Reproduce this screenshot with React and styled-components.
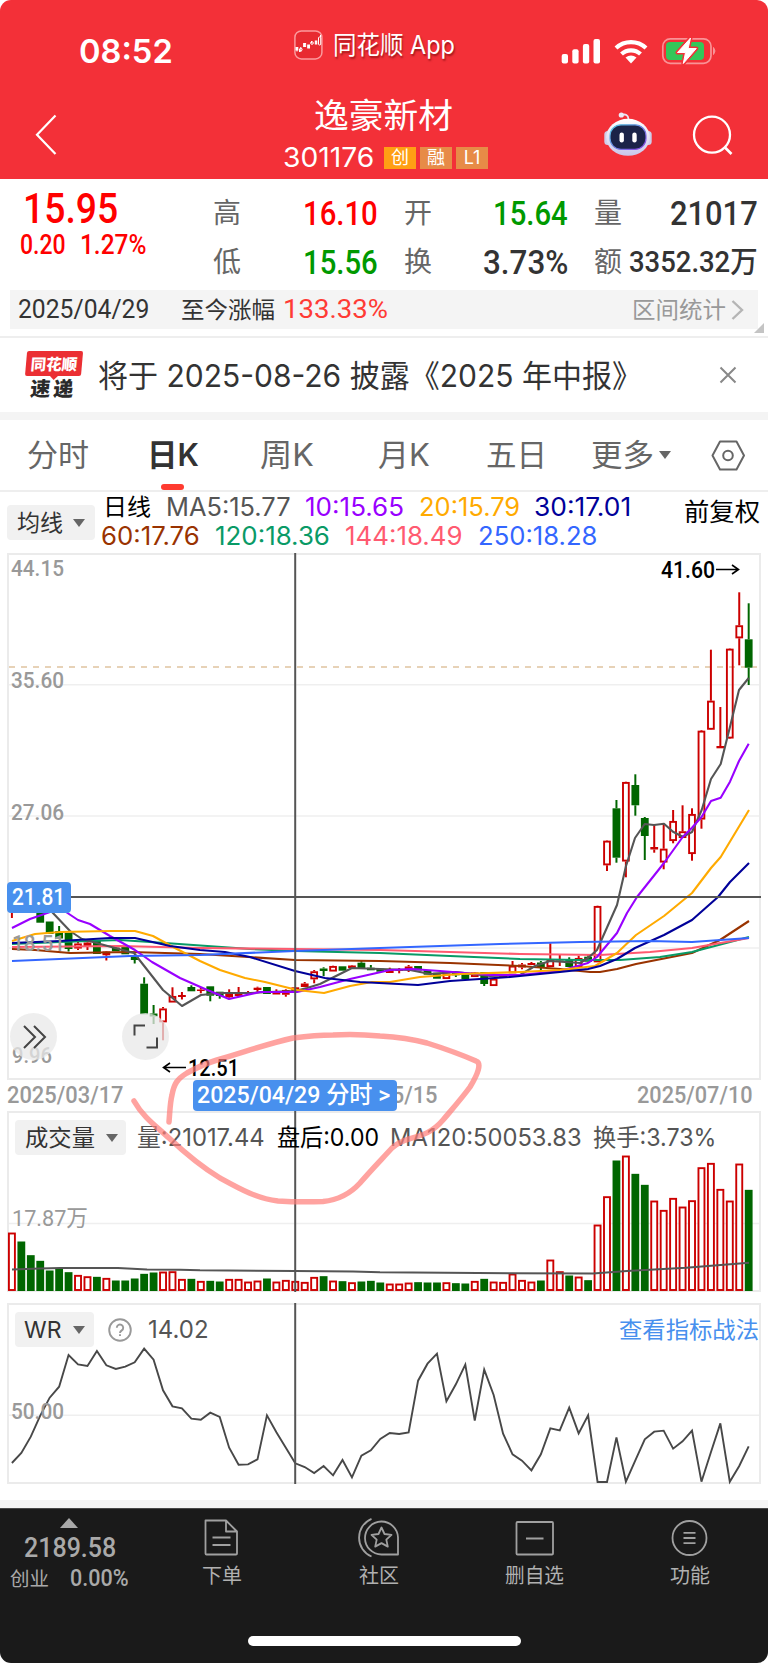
import React, { useLayoutEffect, useRef, useState } from "react";
import styled, { createGlobalStyle } from "styled-components";

const UI = `Inter, "Noto Sans CJK SC", sans-serif`;
const DIN = `Roboto, "Noto Sans CJK SC", sans-serif`;

const C = {
  red: "#f33038",
  up: "#ff0000",
  down: "#009900",
  candleUp: "#cc0000",
  candleDown: "#006600",
  blue: "#4890ee",
  ink: "#333333",
  grey: "#666666",
  pale: "#999999",
  line: "#ebebeb",
  band: "#f4f4f4",
  chip: "#f1f1f1",
};

const Global = createGlobalStyle`
  * { box-sizing: border-box; }
  body { margin: 0; background: #fff; font-family: ${UI}; }
`;

/* ---------- text ---------- */

const Slot = styled.span`
  display: block;
  flex: none;
  width: ${(p) => p.$width}px;
  margin-left: ${(p) => p.$ml || 0}px;
  white-space: nowrap;
`;

const Glyphs = styled.span`
  display: inline-block;
  vertical-align: top;
  transform-origin: 0 50%;
  font-family: ${(p) => (p.$din ? DIN : UI)};
  font-size: ${(p) => p.$size}px;
  font-weight: ${(p) => p.$weight || 400};
  line-height: ${(p) => Math.round(p.$size * 1.2)}px;
  color: ${(p) => p.$color};
  text-shadow: ${(p) => p.$shadow || "none"};
`;

/* A single-line label condensed or widened to fill its slot. */
function Label({ w, ml, size, weight, color = C.ink, din, shadow, children }) {
  const ref = useRef(null);
  const [k, setK] = useState(1);
  useLayoutEffect(() => {
    const natural = ref.current.offsetWidth;
    if (natural) setK(w / natural);
  }, [w, children]);
  return (
    <Slot $width={w} $ml={ml}>
      <Glyphs
        ref={ref}
        $size={size}
        $weight={weight}
        $color={color}
        $din={din}
        $shadow={shadow}
        style={{ transform: `scaleX(${k})` }}
      >
        {children}
      </Glyphs>
    </Slot>
  );
}

/* ---------- frame ---------- */

const Screen = styled.main`
  position: relative;
  width: 768px;
  height: 1663px;
  display: flex;
  flex-direction: column;
  background: #fff;
  border-radius: 11px;
  overflow: hidden;
`;

const Header = styled.header`
  height: 179px;
  background: ${C.red};
  display: flex;
  flex-direction: column;
`;

const StatusBar = styled.div`
  height: 92px;
  padding-top: 10px;
  display: flex;
  align-items: center;
`;

const AppName = styled.div`
  display: flex;
  align-items: center;
  margin: 0 0 12px 121px;
  gap: 10px;
`;

const StatusIcons = styled.svg`
  display: block;
  margin-left: 105px;
`;

const TitleBar = styled.div`
  display: flex;
  align-items: flex-start;
  height: 87px;
`;

const BackIcon = styled.svg`
  margin: 21px 0 0 33px;
`;

const TitleBlock = styled.div`
  width: 210px;
  margin-left: 223px;
  padding-top: 3px;
`;

const CodeRow = styled.div`
  display: flex;
  align-items: center;
  margin-top: 6px;
`;

const Badges = styled.div`
  display: flex;
  gap: 4px;
  margin-left: 10px;
`;

const Badge = styled.span`
  width: 32px;
  height: 22px;
  display: flex;
  justify-content: center;
  align-items: center;
  font: 400 18px/22px ${UI};
  color: #fff;
  background: ${(p) => p.$bg};
`;

const HeaderIcons = styled.svg`
  margin: 17px 0 0 110px;
`;

/* ---------- quote ---------- */

const Quote = styled.section`
  height: 159px;
  border-bottom: 2px solid #eee;
  position: relative;
`;

const QuoteTop = styled.div`
  display: flex;
  height: 111px;
`;

const PriceBlock = styled.div`
  width: 212px;
  padding: 5px 0 0 20px;
`;

const ChangeRow = styled.div`
  display: flex;
  margin-top: -5px;
`;

const StatGrid = styled.div`
  display: grid;
  grid-template-columns: 191px 190px 165px;
  grid-template-rows: 48px 50px;
  padding-top: 10px;
`;

const Stat = styled.div`
  display: flex;
  align-items: center;
  justify-content: space-between;
  padding: 0 ${(p) => p.$pad}px 0 1px;
`;

const RangeBar = styled.div`
  height: 39px;
  margin: 0 10px;
  background: ${C.band};
  display: flex;
  align-items: center;
`;

const Corner = styled.i`
  position: absolute;
  right: 4px;
  bottom: 3px;
  border-style: solid;
  border-width: 0 0 10px 10px;
  border-color: transparent transparent #c4c4c4 transparent;
`;

/* ---------- notice ---------- */

const Notice = styled.section`
  height: 74px;
  display: flex;
  align-items: center;
  padding-left: 24px;
`;

const Express = styled.div`
  width: 58px;
  height: 49px;
  display: flex;
  flex-direction: column;
  align-items: center;
  transform: skewX(-5deg);
  font-family: "Noto Sans CJK SC", sans-serif;
  font-weight: 900;
`;

const ExpressTop = styled.div`
  position: relative;
  width: 56px;
  height: 25px;
  border-radius: 2px;
  background: #eb2f33;
  color: #fff;
  font-size: 15.5px;
  line-height: 25px;
  text-align: center;
  &::after {
    content: "";
    position: absolute;
    left: 25px;
    top: 25px;
    border-style: solid;
    border-width: 4px 4px 0 4px;
    border-color: #eb2f33 transparent transparent transparent;
  }
`;

const ExpressBottom = styled.div`
  width: 43px;
  display: flex;
  justify-content: space-between;
  color: #2a2a2a;
  font-size: 20px;
  line-height: 24px;
`;

const Band = styled.div`
  height: 8px;
  flex: none;
  background: ${C.band};
`;

/* ---------- tabs ---------- */

const Tabs = styled.nav`
  height: 72px;
  border-bottom: 2px solid #eee;
  display: flex;
`;

const Tab = styled.div`
  position: relative;
  display: flex;
  align-items: center;
  height: 70px;
  padding-bottom: 1px;
  margin-left: ${(p) => p.$ml}px;
`;

const Underline = styled.i`
  position: absolute;
  left: 14px;
  bottom: 0;
  width: 23px;
  height: 6px;
  border-radius: 3px;
  background: #ff3b30;
`;

const Caret = styled.i`
  flex: none;
  margin-left: ${(p) => p.$ml}px;
  border-style: solid;
  border-width: 8px 6px 0 6px;
  border-color: ${C.grey} transparent transparent transparent;
`;

const TabIcon = styled.svg`
  margin: 19px 0 0 39px;
`;

/* ---------- indicator headers ---------- */

const Legend = styled.section`
  height: 61px;
  display: flex;
  padding-left: 7px;
`;

const Chip = styled.div`
  flex: none;
  width: ${(p) => p.$w}px;
  height: 35px;
  border-radius: 4px;
  background: ${C.chip};
  display: flex;
  align-items: center;
`;

const LegendChip = styled(Chip)`
  margin-top: 13px;
`;

const LegendLines = styled.div`
  width: 583px;
  margin-left: 6px;
`;

const LegendLine = styled.div`
  display: flex;
  height: 29px;
  align-items: center;
`;

const Adjust = styled.div`
  padding-top: 5px;
`;

/* ---------- chart panels ---------- */

const Panel = styled.section`
  position: relative;
  flex: none;
  width: 754px;
  height: ${(p) => p.$h}px;
  margin-left: 7px;
  border: 2px solid ${C.line};
`;

const Plot = styled.svg`
  position: absolute;
  left: -2px;
  top: -2px;
  display: block;
  overflow: visible;
`;

const PanelHead = styled.div`
  position: relative;
  display: flex;
  align-items: center;
  height: 35px;
  margin: ${(p) => p.$mt}px 0 0 6px;
`;

const HelpIcon = styled.svg`
  margin-left: 14px;
`;

const DateAxis = styled.div`
  flex: none;
  height: 31px;
  display: flex;
  align-items: center;
  position: relative;
`;

const DateTag = styled.div`
  position: absolute;
  left: 193px;
  top: 0;
  width: 204px;
  height: 31px;
  border-radius: 4px;
  background: ${C.blue};
  display: flex;
  align-items: center;
`;

const RoundButton = styled.div`
  position: absolute;
  left: ${(p) => p.$x}px;
  top: 458px;
  width: 47px;
  height: 47px;
  border-radius: 50%;
  background: rgba(232, 232, 232, 0.75);
`;

const PriceTag = styled.div`
  position: absolute;
  left: -2px;
  top: 327px;
  width: 64px;
  height: 31px;
  border-radius: 4px;
  background: ${C.blue};
  display: flex;
  align-items: center;
`;

const Gap = styled.div`
  flex: none;
  height: ${(p) => p.$h}px;
`;

const Annotation = styled.svg`
  position: absolute;
  left: 120px;
  top: 1020px;
  pointer-events: none;
`;

/* ---------- footer ---------- */

const Footer = styled.footer`
  flex: none;
  height: 155px;
  background: #1a1a1a;
  border-top: 1px solid #484848;
  display: flex;
  flex-direction: column;
  align-items: flex-start;
`;

const FooterRow = styled.div`
  display: flex;
  height: 127px;
`;

const IndexBox = styled.div`
  width: 140px;
  height: 90px;
  padding: 9px 0 0 10px;
`;

const UpMark = styled.i`
  display: block;
  width: 0;
  margin-left: 50px;
  border-style: solid;
  border-width: 0 9px 10px 9px;
  border-color: transparent transparent #a9a9a9 transparent;
`;

const IndexRow = styled.div`
  display: flex;
  align-items: center;
  margin-top: ${(p) => p.$mt}px;
`;

const Action = styled.div`
  width: ${(p) => p.$w}px;
  display: flex;
  flex-direction: column;
  align-items: center;
  gap: 5px;
  padding: 7px 2px 0 0;
`;

const HomeBar = styled.div`
  align-self: center;
  width: 273px;
  height: 10px;
  border-radius: 5px;
  background: #fff;
`;

/* ---------- data ---------- */

const STEP = 9.446;
const X0 = 11.9;
const px = (i) => X0 + i * STEP;

/* trend, wick top, body top, body bottom, wick bottom */
const candles = [
  ["R", 905, 905, 905, 918], ["G", 900, 900, 908, 908], ["G", 900, 900, 908, 913],
  ["G", 905, 905, 922.7, 922.7], ["G", 921.5, 921.5, 934, 934], ["G", 926, 931, 938.5, 938.5],
  ["G", 932.7, 932.7, 949, 951.5], ["R", 941, 943.5, 948.5, 950], ["R", 941, 942.5, 946.5, 950],
  ["G", 941, 941, 954, 954], ["R", 951, 951.5, 955.3, 960.5], ["G", 946, 947.5, 951.3, 951.3],
  ["G", 946.5, 946.5, 954.3, 954.3], ["G", 955, 956, 960, 963.5], ["G", 977.3, 983.7, 1014.3, 1014.3],
  ["G", 1005, 1013.5, 1016.5, 1024], ["R", 1007, 1008.5, 1022.3, 1040.3], ["R", 987.3, 996, 1002.5, 1002.5],
  ["R", 992, 995, 997, 999.5], ["G", 985.3, 987, 991.3, 991.3], ["R", 987.3, 989.5, 991, 993.3],
  ["G", 986.3, 986.3, 995.7, 1001.3], ["G", 991.7, 991.7, 996, 998.7], ["R", 989.3, 993.7, 997.3, 999.3],
  ["R", 987, 992.5, 996, 996], ["R", 991, 992.5, 994, 994], ["R", 986.7, 987.7, 990, 992.7],
  ["G", 987, 987, 994, 994], ["R", 989.3, 992, 994.5, 994.5], ["R", 989.3, 990, 994.7, 996.7],
  ["R", 987, 987.3, 991, 991], ["R", 982, 983.5, 987, 987], ["R", 970, 971.3, 979.3, 983.3],
  ["G", 967.3, 968.5, 971, 976], ["R", 965.7, 966, 971.5, 971.5], ["G", 966.3, 966.3, 970.7, 970.7],
  ["R", 965, 965.5, 968, 968], ["G", 961, 962.7, 968, 968], ["G", 965, 967.7, 970.3, 970.3],
  ["G", 968.7, 968.7, 971.7, 971.7], ["R", 967.7, 970, 973, 973], ["R", 968, 969.5, 971, 973.3],
  ["R", 965, 966.5, 970, 972], ["G", 966, 966, 970.5, 970.5], ["G", 970, 970, 974.7, 974.7],
  ["G", 972.7, 972.7, 978.7, 978.7], ["R", 973.3, 973.5, 979, 979], ["G", 972.7, 973, 975.3, 977],
  ["G", 974.3, 974.3, 979.3, 979.3], ["R", 972, 972.5, 977, 977], ["G", 972, 972, 984, 986],
  ["R", 978, 978.7, 986, 986], ["R", 975, 975, 977.5, 977.5], ["R", 961, 965.7, 973.3, 973.3],
  ["R", 963, 964.5, 967.5, 969.3], ["R", 962, 963, 965, 965], ["G", 961, 962.5, 967.3, 970],
  ["R", 943.3, 959.7, 967, 967], ["R", 955, 959, 960.5, 966], ["G", 957.3, 959.5, 967, 967],
  ["R", 955.7, 958, 967, 967], ["G", 955, 956.7, 961.7, 961.7], ["R", 905.7, 906, 962.3, 962.3],
  ["R", 840.3, 840.7, 865.3, 871], ["G", 800, 808.3, 857.7, 862.7], ["R", 781.7, 782, 861.5, 877.3],
  ["G", 774.3, 785, 805.3, 815.7], ["G", 817, 818, 836, 860], ["R", 824, 847, 849.5, 852.7],
  ["R", 825, 848.7, 862.5, 869.3], ["R", 810, 821, 841, 843.3], ["R", 805.3, 831.3, 838, 838],
  ["R", 808.3, 814, 854, 860.7], ["R", 730, 730.7, 819.5, 828.7], ["R", 649.7, 700.7, 729.7, 730],
  ["R", 707, 746, 748.3, 748.3], ["R", 648.3, 648.7, 738.5, 739], ["R", 592.3, 625.3, 638.3, 665.3],
  ["G", 603.3, 639.3, 667.7, 685],
];

const volumes = [
  369, 396, 437, 454, 483, 476, 488, 496, 500, 502, 505, 513, 513, 507, 493, 489, 486, 485, 508, 508,
  514, 514, 516, 508, 508, 516, 513, 507, 516, 511, 514, 517, 502, 500, 513, 515, 518, 516, 514, 519,
  522, 522, 519, 518, 519, 519, 518, 521, 522, 514, 508, 516, 517, 492, 511, 516, 513, 450, 485, 498,
  501, 512, 345, 260, 153, 138, 193, 226, 273, 301, 265, 291, 272, 173, 160, 238, 273, 162, 241,
];
const volumeTrend =
  "RGGGGGGRRGRGGGGGRRRGRGGRRRRGRRRRRGRGRGGGRRRGGGRGGRGRRRRRGRRGRGRRGRGGRRRRRRRRRRG";

const wr = [
  504, 474, 425, 362, 308, 275, 180, 208, 213, 168, 211, 222, 215, 202, 161, 194, 286, 334, 340, 371,
  374, 353, 366, 458, 509, 508, 493, 361, 412, 458, 505, 516, 534, 513, 541, 495, 547, 482, 466, 432,
  414, 417, 412, 257, 206, 176, 319, 268, 209, 377, 224, 300, 416, 478, 497, 526, 478, 400, 406, 338,
  415, 361, 561, 561, 427, 560, 496, 433, 410, 407, 461, 439, 407, 560, 472, 385, 560, 513, 454,
];

const averages = [
  ["#993300", "12,949 35,950 70,953 130,952 200,954 295,960 380,961 450,963 520,966 560,969 590,972 600,972 617,969 636,964 692,953 720,940 749,921"],
  ["#099a66", "12,944 60,942 120,940 165,943 250,949 295,951 380,953 450,956 520,959 580,960 620,960 660,957 692,952 749,937"],
  ["#ff5a70", "12,947 120,946 200,948 295,949 380,950 450,952 520,954 600,955 650,952 692,948 749,938"],
  ["#555555", "52,912 70,931 82,939 115,948 134,953 163,990 182,1006 201,995 220,993 250,993 270,992 295,991 307,988 320,984 352,968 380,969 410,970 430,974 456,972 490,976 520,975 535,966 550,961 580,963 588,958 597,950 617,905 626,866 635,838 644.7,824 654,825 664,823.7 673,831.7 682.7,836.7 692,832 701.7,810 711,779 720.7,764 730,726.7 739,690 748.7,678"],
  ["#9900ff", "12,928 30,919 50,912 66,912 78,920 90,924 110,936 135,950 152,962 180,978 205,989 229,999 260,992 297,992 320,987 350,979 390,970 412,969 440,971 490,975 520,975 560,971 588,963 597,957 617,933 627,913 637,897 664,863 682.7,837 692,827.7 701.7,816.7 711,801 720.7,797.7 730,781.7 739,761 748.7,743.7"],
  ["#ffaa00", "12,941 35,934 60,932 110,931 135,931 153,936 175,948 200,961 220,970 245,978 265,982 297,990 324,993 350,986 372,982 390,982 420,977 460,974 520,972 560,970 595,966 617,953 636,935 664,916 692,893 711,868 720.7,857 749,810"],
  ["#000099", "12,943 60,941 110,938 135,938 170,946 200,950 225,952 250,957 295,971 325,978 360,982 418,985 450,981 510,977 560,972 588,969 600,966 617,959 635,948 664,935 692,920 718,897 730,882 749,863"],
  ["#3366ff", "12,961 130,956 200,955 295,951 380,948 500,944 580,942 650,941 692,942 749,938"],
];

const axisLabels = [["44.15", 11, 575.5], ["35.60", 11, 688], ["27.06", 11, 819.5], ["18.51", 12, 951], ["9.96", 12, 1063]];

/* ---------- drawings ---------- */

function Candle({ i, d: [t, hi, top, bot, lo] }) {
  const x = px(i);
  const up = t === "R";
  const color = up ? C.candleUp : C.candleDown;
  const h = bot - top;
  return (
    <g stroke={color} strokeWidth="2">
      {hi < top && <line x1={x} x2={x} y1={hi} y2={top} />}
      {lo > bot && <line x1={x} x2={x} y1={bot} y2={lo} />}
      {up && h > 4 ? (
        <rect x={x - 2.9} y={top + 0.9} width="5.8" height={h - 1.8} fill="none" strokeWidth="1.9" />
      ) : (
        <rect x={x - 3.9} y={top} width="7.8" height={Math.max(h, 1)} fill={color} stroke="none" />
      )}
    </g>
  );
}

const axisText = { fontFamily: DIN, fontSize: 22.5, fontWeight: 500, fill: C.pale, lengthAdjust: "spacingAndGlyphs" };
const peakText = { fontFamily: DIN, fontSize: 24, fontWeight: 500, fill: "#000", lengthAdjust: "spacingAndGlyphs" };

function PriceChart() {
  return (
    <Panel $h={527}>
      <Plot width="754" height="527" viewBox="7 553 754 527">
        {[684.7, 816, 948].map((y) => (
          <line key={y} x1="9" x2="759" y1={y} y2={y} stroke="#efefef" strokeWidth="1.5" />
        ))}
        <line x1="9" x2="757" y1="667" y2="667" stroke="#dfc3a0" strokeWidth="1.4" strokeDasharray="6 6" />
        {candles.map((d, i) => <Candle key={i} i={i} d={d} />)}
        {averages.map(([c, pts]) => (
          <polyline key={c} points={pts} fill="none" stroke={c} strokeWidth="2.1" strokeLinejoin="round" />
        ))}
        {axisLabels.map(([t, x, y]) => (
          <text key={t} x={x} y={y} textLength={t.length > 4 ? 53 : 40} {...axisText}>{t}</text>
        ))}
        <line x1="7" x2="761" y1="897" y2="897" stroke="#555" strokeWidth="2" />
        <line x1="295.2" x2="295.2" y1="553" y2="1080" stroke="#555" strokeWidth="2" />
        <text x="661" y="578" textLength="54" {...peakText}>41.60</text>
        <path d="M716 569.5H738M732 565l6.5 4.5-6.5 4.5" fill="none" stroke="#000" strokeWidth="1.6" />
        <text x="188" y="1076" textLength="51" {...peakText}>12.51</text>
        <path d="M186 1067.5H164M170 1063l-6.5 4.5 6.5 4.5" fill="none" stroke="#000" strokeWidth="1.6" />
      </Plot>
      <PriceTag><Label din ml={5} w={53} size={24} weight={500} color="#fff">21.81</Label></PriceTag>
      <RoundButton $x={1}>
        <svg width="47" height="47" viewBox="0 0 47 47" fill="none" stroke="#444" strokeWidth="2">
          <path d="M14 13l11 11-11 11M24 13l11 11-11 11" />
        </svg>
      </RoundButton>
      <RoundButton $x={113}>
        <svg width="47" height="47" viewBox="0 0 47 47" fill="none" stroke="#444" strokeWidth="2">
          <path d="M12.500 22.500V12.500h10.500M24.500 34.500H35V24.500" />
        </svg>
      </RoundButton>
    </Panel>
  );
}

function VolumeChart() {
  const y = (v) => 1109.5 + v / 3;
  return (
    <Panel $h={181}>
      <Plot width="754" height="181" viewBox="7 1111 754 181">
        <line x1="9" x2="759" y1="1223.500" y2="1223.500" stroke="#efefef" strokeWidth="1.5" />
        <text x="12" y="1226" textLength="76" {...axisText} fontWeight="400">17.87万</text>
        {volumes.map((v, i) =>
          volumeTrend[i] === "R" ? (
            <rect key={i} x={px(i) - 3} y={y(v) + 1} width="6" height={1289 - y(v)} fill="#fff" stroke={C.candleUp} strokeWidth="1.9" />
          ) : (
            <rect key={i} x={px(i) - 3.9} y={y(v)} width="7.8" height={1291 - y(v)} fill={C.candleDown} />
          )
        )}
        <polyline points="12,1269.500 40,1268.500 60,1268 118,1268 147,1269.500 180,1269.700 200,1270.300 295,1271 353,1271.500 380,1272.300 510,1273.200 593,1273.500 627,1271 686,1267.700 749,1262.700" fill="none" stroke="#555" strokeWidth="1.9" />
        <line x1="295.2" x2="295.2" y1="1111" y2="1292" stroke="#555" strokeWidth="2" />
      </Plot>
      <PanelHead $mt={7}>
        <Chip $w={111}>
          <Label ml={10} w={70} size={23}>成交量</Label>
          <Caret $ml={11} />
        </Chip>
        <Label ml={11} w={128} size={24} color="#555">量:21017.44</Label>
        <Label ml={12} w={102} size={24} color="#000">盘后:0.00</Label>
        <Label ml={11} w={192} size={24} color="#555">MA120:50053.83</Label>
        <Label ml={11} w={123} size={24} color="#555">换手:3.73%</Label>
      </PanelHead>
    </Panel>
  );
}

function WrChart() {
  const points = wr.map((v, i) => `${px(i)},${1295 + v / 3}`).join(" ");
  return (
    <Panel $h={181}>
      <Plot width="754" height="181" viewBox="7 1303 754 181">
        <line x1="9" x2="759" y1="1415.300" y2="1415.300" stroke="#efefef" strokeWidth="1.5" />
        <polyline points={points} fill="none" stroke="#484848" strokeWidth="1.9" />
        <text x="11" y="1419" textLength="53" {...axisText}>50.00</text>
        <line x1="295.2" x2="295.2" y1="1303" y2="1484" stroke="#555" strokeWidth="2" />
      </Plot>
      <PanelHead $mt={7}>
        <Chip $w={79}>
          <Label ml={9} w={37} size={23}>WR</Label>
          <Caret $ml={12} />
        </Chip>
        <HelpIcon width="24" height="24" viewBox="0 0 24 24" fill="none" stroke="#999" strokeWidth="1.900">
          <circle cx="12" cy="12" r="10.800" />
          <path d="M8.800 9.800a3.200 3.200 0 1 1 5 2.600c-1.200.8-1.800 1.300-1.800 2.500M12 16.300v1.700" />
        </HelpIcon>
        <Label ml={16} w={61} size={24} color="#555">14.02</Label>
        <Label ml={410} w={140} size={23} color={C.blue}>查看指标战法</Label>
      </PanelHead>
    </Panel>
  );
}

function StatusGlyphs() {
  return (
    <StatusIcons width="160" height="30" viewBox="560 36 160 30">
      <g fill="#fff">
        <rect x="561.700" y="54" width="6.300" height="9.500" rx="2" />
        <rect x="572.300" y="49.300" width="6.300" height="14.200" rx="2" />
        <rect x="582.900" y="44" width="6.300" height="19.500" rx="2" />
        <rect x="593.500" y="39" width="6.500" height="24.500" rx="2" />
        <path d="M625.500 57.500a9 9 0 0 1 11 0l-5.500 6z" />
      </g>
      <g fill="none" stroke="#fff" strokeWidth="4.200">
        <path d="M616 48a22 22 0 0 1 30 0" />
        <path d="M621.500 54a14 14 0 0 1 19 0" />
      </g>
      <rect x="662.800" y="38.800" width="48.200" height="24.500" rx="7.500" fill="none" stroke="#f99397" strokeWidth="1.700" />
      <rect x="666" y="42" width="38" height="18" rx="4" fill="#34c759" />
      <path d="M713.500 47.500q3 3.500 0 7z" fill="#f99397" stroke="#f99397" />
      <path d="M690.500 38l-13 14.500h8l-2.200 11 13-15h-8.200z" fill="#fff" stroke={C.red} strokeWidth="4" strokeLinejoin="round" />
      <path d="M690.500 38l-13 14.500h8l-2.200 11 13-15h-8.200z" fill="#fff" stroke="#fff" strokeWidth="1" strokeLinejoin="round" />
    </StatusIcons>
  );
}

function AppLogo() {
  return (
    <svg width="29" height="30" viewBox="0 0 29 30" fill="none">
      <rect x=".9" y=".9" width="27" height="28" rx="6.500" fill="#e82a31" stroke="#fb9a9d" strokeWidth="1.500" />
      <g stroke="#fff" strokeWidth="1">
        <path d="M5.500 19v3M10.500 14v2.500M17.500 11v2M26.500 5v2M3 21.500V17M6.800 17v5" />
        <rect x="2" y="17.500" width="1.800" height="2.500" fill="#fff" />
        <circle cx="6.800" cy="19.500" r="1.300" />
        <rect x="9.600" y="13.500" width="2" height="3" />
        <rect x="13.700" y="15" width="1.800" height="3" fill="#fff" />
        <circle cx="18" cy="13" r="1.300" />
        <rect x="21.300" y="11" width="1.500" height="3" fill="#fff" />
        <rect x="24.500" y="7" width="2.200" height="8" rx="1" />
      </g>
    </svg>
  );
}

function RobotAndSearch() {
  return (
    <HeaderIcons width="136" height="50" viewBox="600 109 136 50" fill="none">
      <defs>
        <linearGradient id="shell" x1="0" y1="0" x2="0" y2="1">
          <stop offset="0" stopColor="#fff" />
          <stop offset="1" stopColor="#c9c6ea" />
        </linearGradient>
        <linearGradient id="rim" x1="0" y1="0" x2="1" y2="1">
          <stop offset="0" stopColor="#55cfe8" />
          <stop offset="1" stopColor="#8a3fe0" />
        </linearGradient>
      </defs>
      <path d="M621 115q7-2 7.500 4" stroke="#e8e6f5" strokeWidth="1.800" />
      <circle cx="621.300" cy="115" r="2.600" fill="#ecebf8" />
      <rect x="604.300" y="131" width="8" height="14" rx="3.500" fill="#cfcdea" />
      <rect x="643.700" y="131" width="8" height="14" rx="3.500" fill="#cfcdea" />
      <ellipse cx="628" cy="137.300" rx="21.800" ry="18.500" fill="url(#shell)" />
      <rect x="610" y="124.800" width="36" height="24.500" rx="11" fill="#1b2348" stroke="url(#rim)" strokeWidth="1.200" />
      <rect x="619.500" y="132.500" width="4.400" height="10" rx="2.200" fill="#fff" />
      <rect x="632.300" y="132.500" width="4.400" height="10" rx="2.200" fill="#fff" />
      <circle cx="712" cy="134.700" r="18" stroke="#fff" strokeWidth="2.300" />
      <path d="M724.500 147l7 7" stroke="#fff" strokeWidth="2.600" />
    </HeaderIcons>
  );
}

const footStroke = { fill: "none", stroke: "#a0a0a0", strokeWidth: 1.8, strokeLinejoin: "round" };

const actions = [
  { text: "下单", w: 166, tw: 40, art: <path d="M4.500 4.500H25L36 15.500V37.500q0 1-1 1H5.500q-1 0-1-1zM25 4.500v11h11M11.500 21.500h18M11.500 29h18" /> },
  { text: "社区", w: 148, tw: 40, art: <g><path d="M40 38.500V21.500A16.500 16.500 0 1 0 23.500 38.500zM13.500 2.800A20.500 20.500 0 0 0 13.500 40.500" /><path d="M23.500 11.500l3 6.500 7 .8-5.200 4.800 1.500 7-6.300-3.500-6.300 3.500 1.500-7-5.200-4.800 7-.8z" /></g> },
  { text: "删自选", w: 162, tw: 59, art: <path d="M3.500 7q0-1 1-1H39q1 0 1 1V37.500q0 1-1 1H4.500q-1 0-1-1zM13 22.500h17.500" /> },
  { text: "功能", w: 150, tw: 40, art: <g><circle cx="20.500" cy="22" r="17" /><path d="M14.500 16.800h12M14.500 22h12M14.500 27.200h12" /></g> },
];

export default function App() {
  return (
    <Screen>
      <Global />
      <Header>
        <StatusBar>
          <Label ml={79} w={94} size={33} weight={600} color="#fff">08:52</Label>
          <AppName>
            <AppLogo />
            <Label w={122} size={25} color="#fff" shadow="1px 2px 2px rgba(90,0,0,.55)">同花顺 App</Label>
          </AppName>
          <StatusGlyphs />
        </StatusBar>
        <TitleBar>
          <BackIcon width="24" height="44" viewBox="34 114 24 44" fill="none" stroke="#fff" strokeWidth="2.2">
            <path d="M56.500 116.500L38 135.700l18.500 19.300" />
          </BackIcon>
          <TitleBlock>
            <Label ml={34} w={139} size={34} color="#fff">逸豪新材</Label>
            <CodeRow>
              <Label ml={3} w={91} size={27} color="#fff">301176</Label>
              <Badges>
                <Badge $bg="#ff9f14">创</Badge>
                <Badge $bg="#e78b47">融</Badge>
                <Badge $bg="#e78b47">L1</Badge>
              </Badges>
            </CodeRow>
          </TitleBlock>
          <RobotAndSearch />
        </TitleBar>
      </Header>

      <Quote>
        <QuoteTop>
          <PriceBlock>
            <Label din ml={3} w={95} size={42} weight={500} color={C.up}>15.95</Label>
            <ChangeRow>
              <Label din w={46} size={27} weight={500} color={C.up}>0.20</Label>
              <Label din ml={14} w={66} size={27} weight={500} color={C.up}>1.27%</Label>
            </ChangeRow>
          </PriceBlock>
          <StatGrid>
            <Stat $pad={25}><Label w={28} size={28} color={C.grey}>高</Label><Label din w={75} size={34} weight={500} color={C.up}>16.10</Label></Stat>
            <Stat $pad={25}><Label w={28} size={28} color={C.grey}>开</Label><Label din w={75} size={34} weight={500} color={C.down}>15.64</Label></Stat>
            <Stat $pad={0}><Label w={28} size={28} color={C.grey}>量</Label><Label din w={88} size={34} weight={500}>21017</Label></Stat>
            <Stat $pad={25}><Label w={28} size={28} color={C.grey}>低</Label><Label din w={75} size={34} weight={500} color={C.down}>15.56</Label></Stat>
            <Stat $pad={25}><Label w={28} size={28} color={C.grey}>换</Label><Label din w={85} size={34} weight={500}>3.73%</Label></Stat>
            <Stat $pad={0}><Label w={28} size={28} color={C.grey}>额</Label><Label din w={129} size={30} weight={500}>3352.32万</Label></Stat>
          </StatGrid>
        </QuoteTop>
        <RangeBar>
          <Label din ml={8} w={131} size={26}>2025/04/29</Label>
          <Label ml={32} w={94} size={23}>至今涨幅</Label>
          <Label din ml={8} w={105} size={26} color="#ff3b35">133.33%</Label>
          <Label ml={244} w={94} size={23} color={C.pale}>区间统计</Label>
          <svg width="20" height="24" fill="none" stroke="#b5b5b5" strokeWidth="2.400"><path d="M6.500 3l9.500 9-9.500 9" /></svg>
        </RangeBar>
        <Corner />
      </Quote>

      <Notice>
        <Express>
          <ExpressTop>同花顺</ExpressTop>
          <ExpressBottom><span>速</span><span>递</span></ExpressBottom>
        </Express>
        <Label ml={16} w={544} size={31}>将于 2025-08-26 披露《2025 年中报》</Label>
        <svg width="96" height="20" viewBox="14 0 96 20" stroke="#888" strokeWidth="2"><path d="M92.500 2.500l15 15M107.500 2.500l-15 15" /></svg>
      </Notice>
      <Band />

      <Tabs>
        <Tab $ml={27}><Label w={62} size={31} color={C.grey}>分时</Label></Tab>
        <Tab $ml={58}><Label w={52} size={31} weight={600}>日K</Label><Underline /></Tab>
        <Tab $ml={61}><Label w={54} size={31} color={C.grey}>周K</Label></Tab>
        <Tab $ml={64}><Label w={52} size={31} color={C.grey}>月K</Label></Tab>
        <Tab $ml={56}><Label w={61} size={31} color={C.grey}>五日</Label></Tab>
        <Tab $ml={44}><Label w={63} size={31} color={C.grey}>更多</Label><Caret $ml={5} /></Tab>
        <TabIcon width="36" height="33" viewBox="0 0 36 33" fill="none" stroke={C.grey} strokeWidth="2" strokeLinejoin="round">
          <path d="M10 2.500h16.500l7.500 14-7.500 14H10l-7.500-14z" />
          <circle cx="18" cy="16.500" r="4.800" />
        </TabIcon>
      </Tabs>

      <Legend>
        <LegendChip $w={88}><Label ml={10} w={46} size={23}>均线</Label><Caret $ml={10} /></LegendChip>
        <LegendLines>
          <LegendLine>
            <Label ml={2} w={48} size={23} color="#000">日线</Label>
            <Label ml={15} w={125} size={25} color="#555">MA5:15.77</Label>
            <Label ml={14} w={99} size={25} color="#9900ff">10:15.65</Label>
            <Label ml={15} w={101} size={25} color="#ffaa00">20:15.79</Label>
            <Label ml={14} w={97} size={25} color="#000099">30:17.01</Label>
          </LegendLine>
          <LegendLine>
            <Label w={99} size={25} color="#993300">60:17.76</Label>
            <Label ml={15} w={115} size={25} color="#099a66">120:18.36</Label>
            <Label ml={15} w={118} size={25} color="#ff5a70">144:18.49</Label>
            <Label ml={15} w={119} size={25} color="#3366ff">250:18.28</Label>
          </LegendLine>
        </LegendLines>
        <Adjust><Label w={76} size={25} color="#000">前复权</Label></Adjust>
      </Legend>

      <PriceChart />
      <DateAxis>
        <Label din ml={7} w={117} size={23} weight={500} color={C.pale}>2025/03/17</Label>
        <Label din ml={197} w={117} size={23} weight={500} color={C.pale}>2025/05/15</Label>
        <Label din ml={199} w={116} size={23} weight={500} color={C.pale}>2025/07/10</Label>
        <DateTag><Label din ml={4} w={193} size={24} weight={500} color="#fff">2025/04/29 分时 &gt;</Label></DateTag>
      </DateAxis>
      <VolumeChart />
      <Gap $h={11} />
      <WrChart />
      <Gap $h={16} />
      <Band />

      <Footer>
        <FooterRow>
          <IndexBox>
            <UpMark />
            <IndexRow $mt={3}><Label din ml={14} w={92} size={28} weight={500} color="#a9a9a9">2189.58</Label></IndexRow>
            <IndexRow $mt={0}>
              <Label w={39} size={19} color="#a9a9a9">创业</Label>
              <Label din ml={21} w={59} size={23} weight={500} color="#a9a9a9">0.00%</Label>
            </IndexRow>
          </IndexBox>
          {actions.map((a) => (
            <Action key={a.text} $w={a.w}>
              <svg width="43" height="43" viewBox="0 0 43 43" {...footStroke}>{a.art}</svg>
              <Label w={a.tw} size={20} color="#b0b0b0">{a.text}</Label>
            </Action>
          ))}
        </FooterRow>
        <HomeBar />
      </Footer>

      <Annotation width="370" height="190" viewBox="120 1020 370 190" fill="none" stroke="#ff7c78" strokeOpacity=".7" strokeWidth="5.500" strokeLinecap="round" strokeLinejoin="round">
        <path d="M134 1101C143 1117 156 1126 169 1138C186 1154 200 1166 220 1178C240 1189 258 1199 278 1201C294 1202 310 1202 323 1201.500C338 1200 350 1194 360 1183C372 1169 381 1160 392 1148C407 1134 424 1142 443 1120C454 1107 462 1098 470 1087C478 1074 482 1063 476 1061C460 1054 446 1049 427 1043C408 1038 396 1037 380 1036C360 1034 348 1034 333 1035C316 1035 308 1036 293 1038C266 1044 242 1053 217 1060C204 1064 196 1068 187 1073C177 1079 174 1084 172 1095C170 1103 170 1110 169 1122" />
      </Annotation>
    </Screen>
  );
}
